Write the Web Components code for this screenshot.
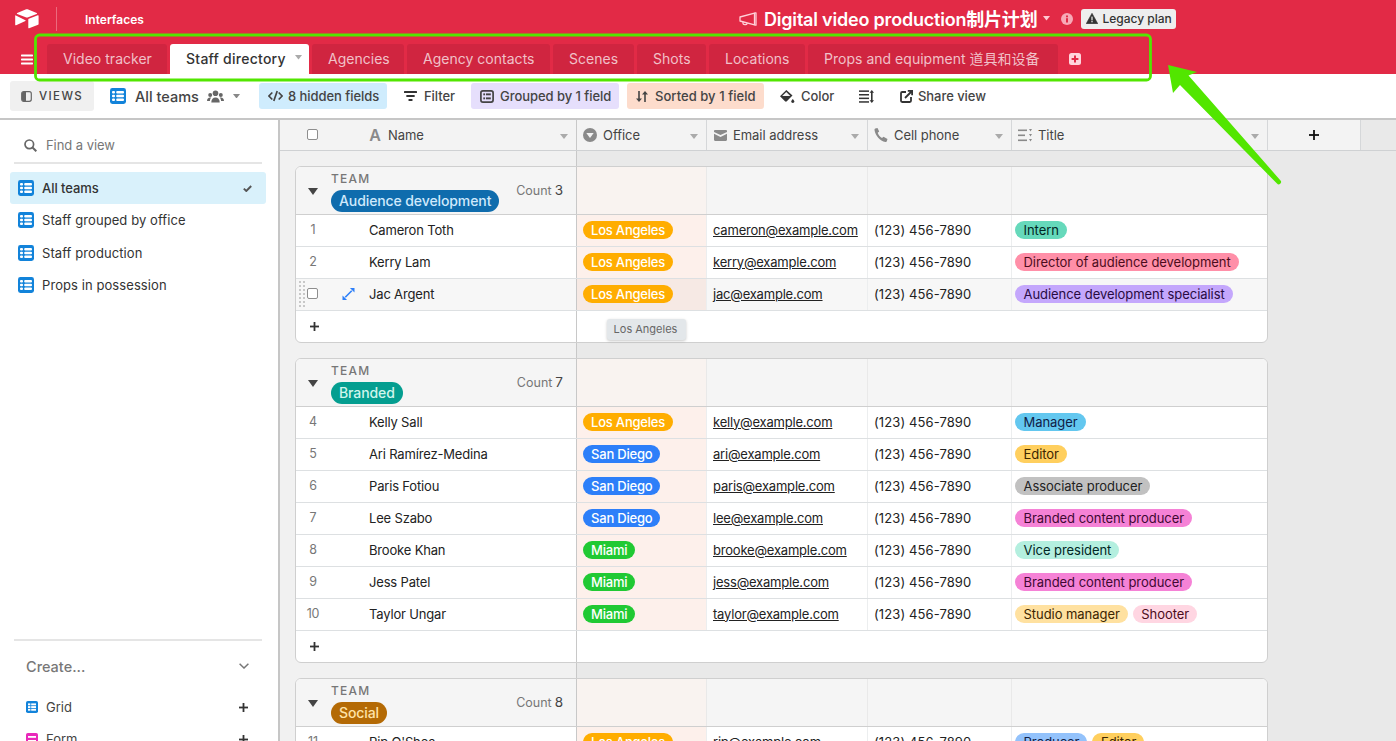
<!DOCTYPE html>
<html lang="en">
<head>
<meta charset="utf-8">
<title>Staff directory</title>
<style>
html,body{margin:0;padding:0;height:741px;overflow:hidden;background:#fff}
body{font-family:Inter,"Noto Sans CJK SC",sans-serif;font-size:13px;color:#333;position:relative}
at-app{height:741px}
</style>
</head>
<body>
<at-app>
  <at-topbar>
    <at-tab style="width:120px">Video tracker</at-tab>
    <at-tab style="width:139px" active>Staff directory</at-tab>
    <at-tab style="width:92px">Agencies</at-tab>
    <at-tab style="width:143px">Agency contacts</at-tab>
    <at-tab style="width:81px">Scenes</at-tab>
    <at-tab style="width:69px">Shots</at-tab>
    <at-tab style="width:96px">Locations</at-tab>
    <at-tab style="width:250px">Props and equipment 道具和设备</at-tab>
  </at-topbar>
  <at-toolbar></at-toolbar>
  <at-main>
    <at-sidebar></at-sidebar>
    <at-grid>
      <at-group team="Audience development" count="3" color="#0f6cad" ink="#cfe9fc">
        <at-row num="1" name="Cameron Toth" office="la" email="cameron@example.com" titles="Intern:#66d9bb:#012524"></at-row>
        <at-row num="2" name="Kerry Lam" office="la" email="kerry@example.com" titles="Director of audience development:#ff8fa8:#4c0c1c"></at-row>
        <at-row num="3" name="Jac Argent" office="la" email="jac@example.com" titles="Audience development specialist:#c4a7fc:#280b42" hover></at-row>
      </at-group>
      <at-group team="Branded" count="7" color="#049e90" ink="#d0f5ec">
        <at-row num="4" name="Kelly Sall" office="la" email="kelly@example.com" titles="Manager:#63c7ef:#102046"></at-row>
        <at-row num="5" name="Ari Ramírez-Medina" office="sd" email="ari@example.com" titles="Editor:#ffcf5e:#3b2501"></at-row>
        <at-row num="6" name="Paris Fotiou" office="sd" email="paris@example.com" titles="Associate producer:#c1c1c1:#222"></at-row>
        <at-row num="7" name="Lee Szabo" office="sd" email="lee@example.com" titles="Branded content producer:#f582d6:#400832"></at-row>
        <at-row num="8" name="Brooke Khan" office="mi" email="brooke@example.com" titles="Vice president:#b4efdf:#012524"></at-row>
        <at-row num="9" name="Jess Patel" office="mi" email="jess@example.com" titles="Branded content producer:#f582d6:#400832"></at-row>
        <at-row num="10" name="Taylor Ungar" office="mi" email="taylor@example.com" titles="Studio manager:#ffe1a0:#3b2501|Shooter:#ffd6e2:#4c0c1c"></at-row>
      </at-group>
      <at-group team="Social" count="8" color="#b46a05" ink="#ffe3a8">
        <at-row num="11" name="Rip O'Shea" office="la" email="rip@example.com" titles="Producer:#93c2fb:#102046|Editor:#ffcf5e:#3b2501"></at-row>
      </at-group>
    </at-grid>
  </at-main>
  <at-annotation></at-annotation>
</at-app>
<script>
const ICONS={
logo:'<svg width="24" height="20" viewBox="0 0 24 20" fill="#fff"><path d="M10.6.6 2.2 4c-.5.2-.5.8 0 1l8.500 3.300c.8.3 1.700.3 2.500 0L21.700 5c.5-.2.5-.8 0-1L13.200.6c-.8-.4-1.800-.4-2.600 0z"/><path d="M13.300 10.400v8.300c0 .4.400.7.800.5l9-3.400c.3-.1.500-.4.500-.7V6.800c0-.4-.4-.7-.8-.5l-9 3.500c-.3.100-.5.300-.5.600z"/><path d="M.9 6.400 10.400 11.200c.4.200.4.700 0 .9l-9.300 4.200c-.4.200-.9-.1-.9-.5V6.800c0-.3.400-.6.700-.4z"/></svg>',
mega:'<svg width="18" height="14" viewBox="0 0 18 14" fill="none" stroke="#ffd0d8" stroke-width="1.300" stroke-linejoin="round"><path d="M1 5 15.500 1.200V12.800L1 9z"/><path d="M15.500 .8h1.500v12.400h-1.500"/><path d="M4 9.800v1.700c0 1 3.500 1.800 4 .2v-.8"/></svg>',
info:'<svg width="12" height="12" viewBox="0 0 12 12"><circle cx="6" cy="6" r="6" fill="#f7a9b7"/><rect x="5" y="5.200" width="2" height="4.300" fill="#e22a46"/><rect x="5" y="2.500" width="2" height="1.800" fill="#e22a46"/></svg>',
warn:'<svg width="12" height="11" viewBox="0 0 12 11"><path d="M6 .3 11.800 10.700H.2z" fill="#333" stroke="#333" stroke-linejoin="round" stroke-width=".6"/><rect x="5.400" y="3.600" width="1.200" height="3.800" fill="#eee"/><rect x="5.400" y="8" width="1.200" height="1.300" fill="#eee"/></svg>',
burger:'<svg width="12" height="11" viewBox="0 0 12 11" fill="#fff"><rect width="12" height="1.800" y=".6" rx=".6"/><rect width="12" height="1.800" y="4.600" rx=".6"/><rect width="12" height="1.800" y="8.600" rx=".6"/></svg>',
plusbox:'<svg width="12" height="12" viewBox="0 0 12 12"><rect width="12" height="12" rx="2.500" fill="#ffd5dc"/><path d="M6 2.600v6.800M2.600 6h6.800" stroke="#e22a46" stroke-width="2"/></svg>',
panel:'<svg width="11" height="11" viewBox="0 0 11 11" fill="none"><rect x=".7" y=".7" width="9.600" height="9.600" rx="2" stroke="#666" stroke-width="1.200"/><path d="M1 2.200c0-.7.500-1.200 1.200-1.200H5v9H2.200C1.500 10 1 9.500 1 8.800z" fill="#666"/></svg>',
grid:'<svg width="16" height="16" viewBox="0 0 16 16"><rect width="16" height="16" rx="2.400" fill="#1283da"/><g fill="#fff"><rect x="2" y="3" width="3" height="2.400" rx="1"/><rect x="6.200" y="3" width="7.800" height="2.400" rx="1"/><rect x="2" y="6.800" width="3" height="2.400" rx="1"/><rect x="6.200" y="6.800" width="7.800" height="2.400" rx="1"/><rect x="2" y="10.600" width="3" height="2.400" rx="1"/><rect x="6.200" y="10.600" width="7.800" height="2.400" rx="1"/></g></svg>',
gridsm:'<svg width="12" height="12" viewBox="0 0 12 12"><rect width="12" height="12" rx="1.800" fill="#1283da"/><g fill="#fff"><rect x="2" y="2.400" width="2.400" height="1.900"/><rect x="5.200" y="2.400" width="4.800" height="1.900"/><rect x="2" y="5.100" width="2.400" height="1.900"/><rect x="5.200" y="5.100" width="4.800" height="1.900"/><rect x="2" y="7.800" width="2.400" height="1.900"/><rect x="5.200" y="7.800" width="4.800" height="1.900"/></g></svg>',
form:'<svg width="12" height="12" viewBox="0 0 12 12"><rect width="12" height="12" rx="1.800" fill="#e929ba"/><rect x="2" y="3" width="8" height="1.800" fill="#fff"/><rect x="2" y="7" width="8" height="2" fill="#fff"/></svg>',
people:'<svg width="17" height="13" viewBox="0 0 17 13" fill="#666"><circle cx="8.500" cy="3.300" r="2.800"/><circle cx="3.200" cy="5" r="2"/><circle cx="13.800" cy="5" r="2"/><path d="M4.300 12.500c0-3.200 1.800-5 4.200-5s4.200 1.800 4.200 5z"/><path d="M0 11c0-2.300 1.300-3.600 3.200-3.600.4 0 .8.100 1.100.200-.9 1-1.300 2-1.400 3.400z"/><path d="M17 11c0-2.300-1.300-3.600-3.200-3.600-.4 0-.8.100-1.100.200.9 1 1.300 2 1.400 3.400z"/></svg>',
hidden:'<svg width="15" height="12" viewBox="0 0 15 12" fill="none" stroke="#444" stroke-width="1.700"><path d="M4.300 2.500.9 6l3.400 3.500M10.700 2.500 14.100 6l-3.400 3.500"/><path d="M9.200 1 5.800 11"/></svg>',
filter:'<svg width="13" height="10" viewBox="0 0 13 10" fill="#333"><rect width="13" height="1.900" rx=".5"/><rect x="2.300" y="4" width="8.400" height="1.900" rx=".5"/><rect x="4.500" y="8" width="4" height="1.900" rx=".5"/></svg>',
grouped:'<svg width="14" height="13" viewBox="0 0 14 13" fill="none"><rect x=".9" y=".9" width="12.200" height="11.200" rx="2" stroke="#444" stroke-width="1.700"/><g fill="#444"><rect x="3.300" y="3.400" width="1.800" height="1.900"/><rect x="6" y="3.400" width="4.800" height="1.900"/><rect x="3.300" y="7.400" width="1.800" height="1.900"/><rect x="6" y="7.400" width="4.800" height="1.900"/></g></svg>',
sort:'<svg width="12" height="11" viewBox="0 0 12 11" fill="#444"><path d="M2.200 0h1.600v7.500H6L3 11 0 7.500h2.200z"/><path d="M8.200 11h1.600V3.500H12L9 0 6 3.500h2.200z"/></svg>',
color:'<svg width="15" height="13" viewBox="0 0 15 13" fill="#333"><path d="M6.300 0 0 6.300l5 5c.5.500 1.300.500 1.800 0l5.700-5.800z"/><path d="M12.800 9c.9 1.100 1.600 1.900 1.600 2.600 0 .8-.7 1.400-1.600 1.400s-1.600-.6-1.600-1.400c0-.7.700-1.500 1.600-2.600z"/><path d="M2.200 6 6.300 1.900l4 4z" fill="#fff" opacity=".95"/></svg>',
height:'<svg width="15" height="13" viewBox="0 0 15 13" fill="#333"><rect width="10" height="1.500" y=".4"/><rect width="10" height="1.500" y="4"/><rect width="10" height="1.500" y="7.600"/><rect width="10" height="1.500" y="11.200"/><path d="M12.800 0 15 2.800h-1.400v7.400H15L12.800 13l-2.200-2.800H12V2.800h-1.400z"/></svg>',
share:'<svg width="13" height="13" viewBox="0 0 13 13" fill="none" stroke="#333" stroke-width="1.800"><path d="M6 2H2.200C1.500 2 1 2.500 1 3.200v7.600c0 .7.500 1.200 1.200 1.200h7.600c.7 0 1.200-.5 1.200-1.200V7"/><path d="M5 8 12 1M7.800.9H12.100V5.200"/></svg>',
search:'<svg width="13" height="13" viewBox="0 0 13 13" fill="none" stroke="#666" stroke-width="1.700"><circle cx="5.300" cy="5.300" r="4.300"/><path d="M8.500 8.500 12.300 12.300" stroke-width="2"/></svg>',
check:'<svg width="9" height="7" viewBox="0 0 9 7" fill="none" stroke="#555" stroke-width="1.900"><path d="M.8 3.600 3.300 6 8.200 1"/></svg>',
chev:'<svg width="10" height="6" viewBox="0 0 10 6" fill="none" stroke="#777" stroke-width="1.500"><path d="M.6.700 5 5 9.400.7"/></svg>',
plus:'<svg width="9" height="9" viewBox="0 0 9 9" fill="#333"><rect x="3.600" width="1.800" height="9"/><rect y="3.600" width="9" height="1.800"/></svg>',
plusbig:'<svg width="10" height="10" viewBox="0 0 10 10" fill="#111"><rect x="4.100" width="1.800" height="10"/><rect y="4.100" width="10" height="1.800"/></svg>',
office:'<svg width="14" height="14" viewBox="0 0 14 14"><circle cx="7" cy="7" r="7" fill="#8a8a8a"/><path d="M3.300 5h7.400L7 10z" fill="#f3f3f3"/></svg>',
mail:'<svg width="13" height="11" viewBox="0 0 13 11" fill="#8a8a8a"><path d="M0 1.200C0 .5.500 0 1.200 0h10.600c.7 0 1.200.5 1.200 1.200v.7L6.500 5 0 1.900z"/><path d="M0 3.800 6.500 7 13 3.800v6c0 .7-.5 1.200-1.200 1.200H1.200C.5 11 0 10.500 0 9.800z"/></svg>',
phone:'<svg width="14" height="14" viewBox="0 0 14 14" fill="#8a8a8a"><path d="M1.200.6 3.500 0l1.700 3.500-1.500 1.200c.6 2 2.200 4 4.300 5.200l1.500-1.200L13.500 11l-.7 2.300c-.2.500-.7.800-1.300.7C5.800 12.800 1.500 8 .5 2c-.1-.6.200-1.200.7-1.400z"/></svg>',
multi:'<svg width="14" height="13" viewBox="0 0 14 13" fill="#8a8a8a"><rect width="9" height="1.600" y=".5"/><rect width="7" height="1.600" y="5.500"/><rect width="9" height="1.600" y="10.500"/><path d="M11 0h3l-1.500 2.400zM11 5h3l-1.500 2.400zM11 10h3l-1.500 2.400z"/></svg>',
expand:'<svg width="13" height="12" viewBox="0 0 13 13" fill="#2d7ff9"><path d="M8 0h5v5z"/><path d="M5 13H0V8z"/><path d="M3 10 10 3" stroke="#2d7ff9" stroke-width="1.700"/></svg>'
};
const icon=n=>ICONS[n];
const caret=(c='#999',w=8,h=5)=>`<svg width="${w}" height="${h}" viewBox="0 0 8 5" preserveAspectRatio="none"><path d="M0 0h8L4 5z" fill="${c}"/></svg>`;

class AtApp extends HTMLElement{constructor(){super();this.attachShadow({mode:'open'}).innerHTML=`<style>:host{display:flex;flex-direction:column;width:1396px;position:relative;overflow:hidden}</style><slot></slot>`}}

class AtTab extends HTMLElement{
  connectedCallback(){const a=this.hasAttribute('active');
    this.attachShadow({mode:'open'}).innerHTML=`<style>
    :host{display:flex;align-items:center;height:30px;padding:0 0 0 16px;box-sizing:border-box;border-radius:3px 3px 0 0;white-space:nowrap;flex:none;
      font:400 14px/1 Inter,"Noto Sans CJK SC",sans-serif;letter-spacing:.02px;background:${a?'#fff':'#d02540'};color:${a?'#333':'rgba(255,255,255,.72)'}}
    :host([active]){font-weight:500;letter-spacing:.25px}
    .c{margin-left:9px;display:flex;margin-top:-3px}
    </style><slot></slot>${a?`<span class="c">${caret('#aaa',7,4.5)}</span>`:''}`;
  }
}

class AtTopbar extends HTMLElement{
  constructor(){super();this.attachShadow({mode:'open'}).innerHTML=`<style>
  :host{display:block;height:74px;background:#e22a46;color:#fff;flex:none}
  .r1{display:grid;grid-template-columns:739px auto;height:38px;align-items:center}
  .left{display:flex;align-items:center}
  .logo{margin-left:15px;display:flex}
  .div{width:1px;height:24px;background:rgba(255,255,255,.3);margin-left:17px}
  .if{margin-left:28px;font-size:12px;font-weight:600}
  .title{display:flex;align-items:center;margin-top:-1px}
  .title b{font-size:18px;font-weight:600;margin:0 0 2px 7px;letter-spacing:-.2px;white-space:nowrap}
  .car{margin-left:6px;display:flex}
  .inf{margin-left:11px;display:flex}
  .leg{margin-left:8px;height:20px;width:95px;box-sizing:border-box;padding-left:5px;background:#eee;border-radius:3px;color:#333;font-size:12px;font-weight:500;display:flex;align-items:center;gap:4px;white-space:nowrap}
  .r2{display:flex;align-items:flex-end;height:30px;margin-top:6px}
  .bg{width:47px;display:flex;align-items:center;height:30px;padding-left:21px;box-sizing:border-box}
  .tabs{display:flex}
  .tabs ::slotted(*){margin-right:3px}
  .add{display:flex;align-items:center;margin-left:8px;height:30px}
  </style>
  <div class="r1"><div class="left"><span class="logo">${icon('logo')}</span><span class="div"></span><span class="if">Interfaces</span></div>
  <div class="title">${icon('mega')}<b>Digital video production制片计划</b><span class="car">${caret('#ffc9d2',7,4.5)}</span><span class="inf">${icon('info')}</span><span class="leg">${icon('warn')}Legacy plan</span></div></div>
  <div class="r2"><span class="bg">${icon('burger')}</span><div class="tabs"><slot></slot></div><span class="add">${icon('plusbox')}</span></div>`}
}

class AtChip extends HTMLElement{
  connectedCallback(){const i=this.getAttribute('icon');
    this.attachShadow({mode:'open'}).innerHTML=`<style>
    :host{display:flex;align-items:center;height:26px;box-sizing:border-box;padding:0 8px;gap:7px;border-radius:3px;font-size:13px;font-weight:500;color:#444;white-space:nowrap;background:var(--bg,transparent);letter-spacing:-.05px}
    span{display:flex}
    </style><span>${icon(i)}</span><slot></slot>`;
  }
}

class AtToolbar extends HTMLElement{
  constructor(){super();this.attachShadow({mode:'open'}).innerHTML=`<style>
  :host{display:flex;align-items:center;height:46px;box-sizing:border-box;border-bottom:2px solid #c6c6c6;flex:none;padding-left:10px;padding-bottom:0}
  .views{display:flex;align-items:center;gap:7px;width:84px;height:30px;box-sizing:border-box;padding-left:11px;background:#f0f0f0;border-radius:3px;font-size:11.500px;font-weight:500;letter-spacing:1.400px;color:#444}
  .cur{display:flex;align-items:center;margin-left:16px;width:149px}
  .cur b{font-weight:500;font-size:14.500px;margin-left:9px;color:#444;white-space:nowrap}
  .cur i{display:flex;margin-left:8px}.cur u{display:flex;margin-left:9px}
  #a{--bg:#cfecfd;padding:0 8px 0 9px;width:128px;box-sizing:border-box;gap:5px}
  #b{--bg:transparent;width:67px;margin-left:9px;padding-left:8px;gap:7px}
  #c{--bg:#e6dffc;width:148px;margin-left:8px;gap:6px;padding-left:9px}
  #d{--bg:#fddccc;width:137px;margin-left:8px;gap:7px;padding-left:9px;letter-spacing:.05px}
  #e{margin-left:8px;width:70px;gap:6px}
  #f{margin-left:9px;padding-left:8px;width:27px}
  #g{margin-left:14px;gap:5px}
  </style>
  <div class="views">${icon('panel')}VIEWS</div>
  <div class="cur">${icon('grid')}<b>All teams</b><i>${icon('people')}</i><u>${caret('#888',7,4.5)}</u></div>
  <at-chip id="a" icon="hidden">8 hidden fields</at-chip>
  <at-chip id="b" icon="filter">Filter</at-chip>
  <at-chip id="c" icon="grouped">Grouped by 1 field</at-chip>
  <at-chip id="d" icon="sort">Sorted by 1 field</at-chip>
  <at-chip id="e" icon="color">Color</at-chip>
  <at-chip id="f" icon="height"></at-chip>
  <at-chip id="g" icon="share">Share view</at-chip>`}
}

class AtViewItem extends HTMLElement{
  connectedCallback(){const s=this.hasAttribute('selected');
    this.attachShadow({mode:'open'}).innerHTML=`<style>
    :host{display:flex;align-items:center;height:32.330px;margin:0 12px 0 10px;padding-left:8px;box-sizing:border-box;border-radius:3px;font-size:13px;color:#333;letter-spacing:.08px}
    :host([selected]){background:#d9f1fb;font-weight:500;letter-spacing:-.05px}
    span{display:flex}
    .t{margin-left:8px;flex:1}
    .k{margin-right:14px}
    </style><span>${icon('grid')}</span><span class="t"><slot></slot></span>${s?`<span class="k">${icon('check')}</span>`:''}`;
  }
}

class AtCreate extends HTMLElement{
  connectedCallback(){const i=this.getAttribute('icon');
    this.attachShadow({mode:'open'}).innerHTML=`<style>
    :host{display:flex;align-items:center;height:32px;padding:0 30px 0 26px;font-size:13px;color:#444}
    span{display:flex}.t{margin-left:8px;flex:1}
    </style><span>${icon(i)}</span><span class="t"><slot></slot></span><span>${icon('plus')}</span>`;
  }
}

class AtSidebar extends HTMLElement{
  constructor(){super();this.attachShadow({mode:'open'}).innerHTML=`<style>
  :host{display:flex;flex-direction:column;width:280px;box-sizing:border-box;border-right:2px solid #c6c6c6;height:621px;flex:none;overflow:hidden;background:#fff}
  .find{display:flex;align-items:center;height:44px;padding-top:8px;margin:0 16px 8px 14px;padding-left:10px;box-sizing:border-box;border-bottom:2px solid #e5e5e5;color:#777;font-size:13px;gap:9px;letter-spacing:-.05px}
  .find span{display:flex}
  .foot{margin:auto 0 0;height:102px;overflow:hidden;flex:none}
  .ln{height:2px;background:#e5e5e5;margin:0 16px 0 14px}
  .cr{display:flex;align-items:center;justify-content:space-between;padding:0 29px 0 26px;height:50px;font-size:14.500px;color:#777;font-weight:500}
  .cr span{display:flex}
  </style>
  <div class="find"><span>${icon('search')}</span>Find a view</div>
  <at-view-item selected>All teams</at-view-item>
  <at-view-item>Staff grouped by office</at-view-item>
  <at-view-item>Staff production</at-view-item>
  <at-view-item>Props in possession</at-view-item>
  <div class="foot"><div class="ln"></div><div class="cr">Create...<span>${icon('chev')}</span></div>
  <div class="g"><at-create icon="gridsm">Grid</at-create><at-create icon="form">Form</at-create></div></div>`}
}

class AtPill extends HTMLElement{
  connectedCallback(){
    this.attachShadow({mode:'open'}).innerHTML=`<style>
    :host{display:inline-flex;align-items:center;height:18px;padding:0 8px;border-radius:9px;font-size:13px;line-height:18px;white-space:nowrap;background:var(--pill,#ccc);color:var(--ink,#222);letter-spacing:var(--ls,-.05px)}
    </style><slot></slot>`;
  }
}

const OFF={la:['Los Angeles','#ffad00'],sd:['San Diego','#2d7ff9'],mi:['Miami','#20c933']};

class AtRow extends HTMLElement{
  connectedCallback(){
    const g=n=>this.getAttribute(n)||'';const hov=this.hasAttribute('hover');const o=OFF[g('office')];
    const pills=g('titles').split('|').map(t=>{const[a,b,c]=t.split(':');return `<at-pill style="--pill:${b};--ink:${c}">${a}</at-pill>`}).join('');
    this.attachShadow({mode:'open'}).innerHTML=`<style>
    :host{display:grid;grid-template-columns:281px 130px 161px 144px 255px;height:32px;box-sizing:border-box;border-bottom:1px solid #dde0e2;background:${hov?'#f7f7f7':'#fff'};font-size:13px;color:#222}
    .c{display:flex;align-items:center;min-width:0;box-sizing:border-box;border-right:1px solid #eceeef;white-space:nowrap;padding-bottom:2px}
    .l{border-right:1px solid #c8c8c8;position:relative;letter-spacing:-.17px}
    .n{width:34px;text-align:center;color:#777;font-size:12.500px;flex:none}
    .nm{margin-left:39px}
    .o{background:${hov?'#f6e9e4':'#fdf0eb'};padding-left:6px;font-weight:500;color:#fff;--ls:-.2px}
    .e{padding-left:6px;letter-spacing:-.2px}.e a{color:#222;text-decoration:underline}
    .p{padding-left:6px;letter-spacing:.1px}
    .t{padding-left:3px;gap:5px;border-right:0}
    .t at-pill{padding:0 8px 0 8.500px}
    .hov{display:flex;align-items:center;width:73px;flex:none;height:29px}
    .dots{width:8px;height:28px;margin-left:2px;background-image:radial-gradient(circle,#c8c8c8 1px,transparent 1.200px);background-size:4px 4px}
    .cb{width:9px;height:9px;border:1px solid #8e8e8e;border-radius:2px;margin-left:1px;background:#fff;flex:none}
    .ex{display:flex;margin-left:24px}
    </style>
    <div class="c l">${hov?`<div class="hov"><span class="dots"></span><span class="cb"></span><span class="ex">${icon('expand')}</span></div><span>${g('name')}</span>`:`<span class="n">${g('num')}</span><span class="nm">${g('name')}</span>`}</div>
    <div class="c o"><at-pill style="--pill:${o[1]};--ink:#fff">${o[0]}</at-pill></div>
    <div class="c e"><a>${g('email')}</a></div>
    <div class="c p">(123) 456-7890</div>
    <div class="c t">${pills}</div>`;
  }
}

class AtGroup extends HTMLElement{
  connectedCallback(){
    const g=n=>this.getAttribute(n);
    this.attachShadow({mode:'open'}).innerHTML=`<style>
    :host{display:block;width:973px;box-sizing:border-box;border:1px solid #cfcfcf;border-radius:6px;overflow:hidden;background:#fff;margin-bottom:15px}
    .h{display:grid;grid-template-columns:281px 130px 161px 144px 255px;height:48px;box-sizing:border-box;border-bottom:1px solid #cfcfcf;background:#f5f5f5}
    .h>div{border-right:1px solid #e9e9e9}
    .h .l{border-right:1px solid #c8c8c8;display:flex;align-items:center}
    .h .o{background:#f9f3f0}
    .h .z{border-right:0}
    .tri{width:34px;flex:none;display:flex;justify-content:center;padding-top:2px}
    .lab{flex:1;align-self:stretch;margin-left:1px;display:flex;flex-direction:column;align-items:flex-start;padding-top:5px;box-sizing:border-box}
    .team{font-size:12px;font-weight:500;letter-spacing:1.200px;color:#777;line-height:14px;margin:0 0 4px 0}
    .pill{height:22px;box-sizing:border-box;padding:0 8px 1px;border-radius:11px;display:flex;align-items:center;font-size:14px;font-weight:500;background:${g('color')};color:${g('ink')};white-space:nowrap;letter-spacing:-.1px;flex:none}
    .cnt{margin-right:13px;font-size:12.500px;color:#777;white-space:nowrap;padding-bottom:1px}
    .cnt b{font-weight:400;font-size:13.500px;color:#444;margin-left:3px}
    .add{display:grid;grid-template-columns:281px auto;height:31px}
    .add div:first-child{border-right:1px solid #c8c8c8;display:flex;align-items:center;padding-left:14px;box-sizing:border-box}
    </style>
    <div class="h"><div class="l"><span class="tri">${caret('#444',10,7)}</span><div class="lab"><span class="team">TEAM</span><span class="pill">${g('team')}</span></div><span class="cnt">Count<b>${g('count')}</b></span></div><div class="o"></div><div></div><div></div><div class="z"></div></div>
    <slot></slot>
    <div class="add"><div>${icon('plus')}</div><div></div></div>`;
  }
}

class AtColumnHead extends HTMLElement{
  connectedCallback(){const i=this.getAttribute('icon');const gl=i==='A';
    this.attachShadow({mode:'open'}).innerHTML=`<style>
    :host{display:flex;align-items:center;box-sizing:border-box;border-right:1px solid #d5d7d9;font-size:13px;color:#444;position:relative;padding-left:6px;letter-spacing:-.05px;white-space:nowrap;width:var(--w)}
    .ic{display:flex;width:14px;justify-content:center;margin-right:6px;flex:none}
    .gl{font-size:16px;font-weight:600;color:#8a8a8a;line-height:1}
    .car{position:absolute;right:8px;top:14px;display:flex}
    </style><span class="ic">${gl?'<span class="gl">A</span>':icon(i)}</span><slot></slot><span class="car">${caret('#aaa')}</span>`;
  }
}

class AtGrid extends HTMLElement{
  constructor(){super();this.attachShadow({mode:'open'}).innerHTML=`<style>
  :host{display:flex;flex-direction:column;flex:1;min-width:0;height:621px;overflow:hidden}
  .head{display:flex;height:31px;flex:none;box-sizing:border-box;border-bottom:1px solid #cfd1d3;background:linear-gradient(to right,#f3f3f3 0 1081px,#e9e9e9 1081px)}
  .sel{display:flex;align-items:center;width:297px;box-sizing:border-box;border-right:1px solid #c8c8c8;flex:none}
  .box{width:9px;height:9px;border:1px solid #8e8e8e;border-radius:2px;background:#fff;margin-left:27px;margin-top:-1px;flex:none}
  .sel at-col{border:0;align-self:stretch;flex:1;margin-left:50px;padding-left:0}
  .plus{width:93px;box-sizing:border-box;border-right:1px solid #d5d7d9;display:flex;align-items:center;justify-content:center;background:#f3f3f3}
  .body{flex:1;position:relative;overflow:hidden;padding:15px 0 0 15px;background:linear-gradient(to right,#f1f1f1 0 296px,#c8c8c8 296px 297px,#e9e9e9 297px)}
  .tip{position:absolute;left:327px;top:168px;height:21px;width:79px;box-sizing:border-box;padding:0 2px 2px 0;display:flex;align-items:center;justify-content:center;background:#e3e7ea;border-radius:3px;box-shadow:0 1px 3px rgba(0,0,0,.22);font-size:11px;color:#666;z-index:2}
  </style>
  <div class="head">
    <div class="sel"><span class="box"></span><at-col icon="A">Name</at-col></div>
    <at-col icon="office" style="--w:130px">Office</at-col>
    <at-col icon="mail" style="--w:161px">Email address</at-col>
    <at-col icon="phone" style="--w:144px">Cell phone</at-col>
    <at-col icon="multi" style="--w:256px">Title</at-col>
    <div class="plus">${icon('plusbig')}</div>
  </div>
  <div class="body"><slot></slot><div class="tip">Los Angeles</div></div>`}
}

class AtMain extends HTMLElement{constructor(){super();this.attachShadow({mode:'open'}).innerHTML=`<style>:host{display:flex;flex:1;min-height:0;height:621px}</style><slot></slot>`}}

class AtAnnotation extends HTMLElement{
  constructor(){super();this.attachShadow({mode:'open'}).innerHTML=`<style>
  :host{position:absolute;left:0;top:0;width:1396px;height:741px;pointer-events:none;z-index:5;display:block}
  svg{display:block}
  </style>
  <svg width="1396" height="741" viewBox="0 0 1396 741">
    <rect x="35.500" y="35" width="1115" height="45" rx="4" fill="none" stroke="#52e600" stroke-width="2.800"/>
    <path d="M1168 65 1197 72 1188.500 75.500 1280.500 180.500a2.200 2.200 0 0 1-3.500 3L1180 85 1173 93z" fill="#52e600"/>
  </svg>`}
}

[['at-app',AtApp],['at-tab',AtTab],['at-topbar',AtTopbar],['at-chip',AtChip],['at-toolbar',AtToolbar],['at-view-item',AtViewItem],['at-create',AtCreate],['at-sidebar',AtSidebar],['at-pill',AtPill],['at-row',AtRow],['at-group',AtGroup],['at-col',AtColumnHead],['at-grid',AtGrid],['at-main',AtMain],['at-annotation',AtAnnotation]].forEach(([n,c])=>customElements.define(n,c));
</script>
</body>
</html>
